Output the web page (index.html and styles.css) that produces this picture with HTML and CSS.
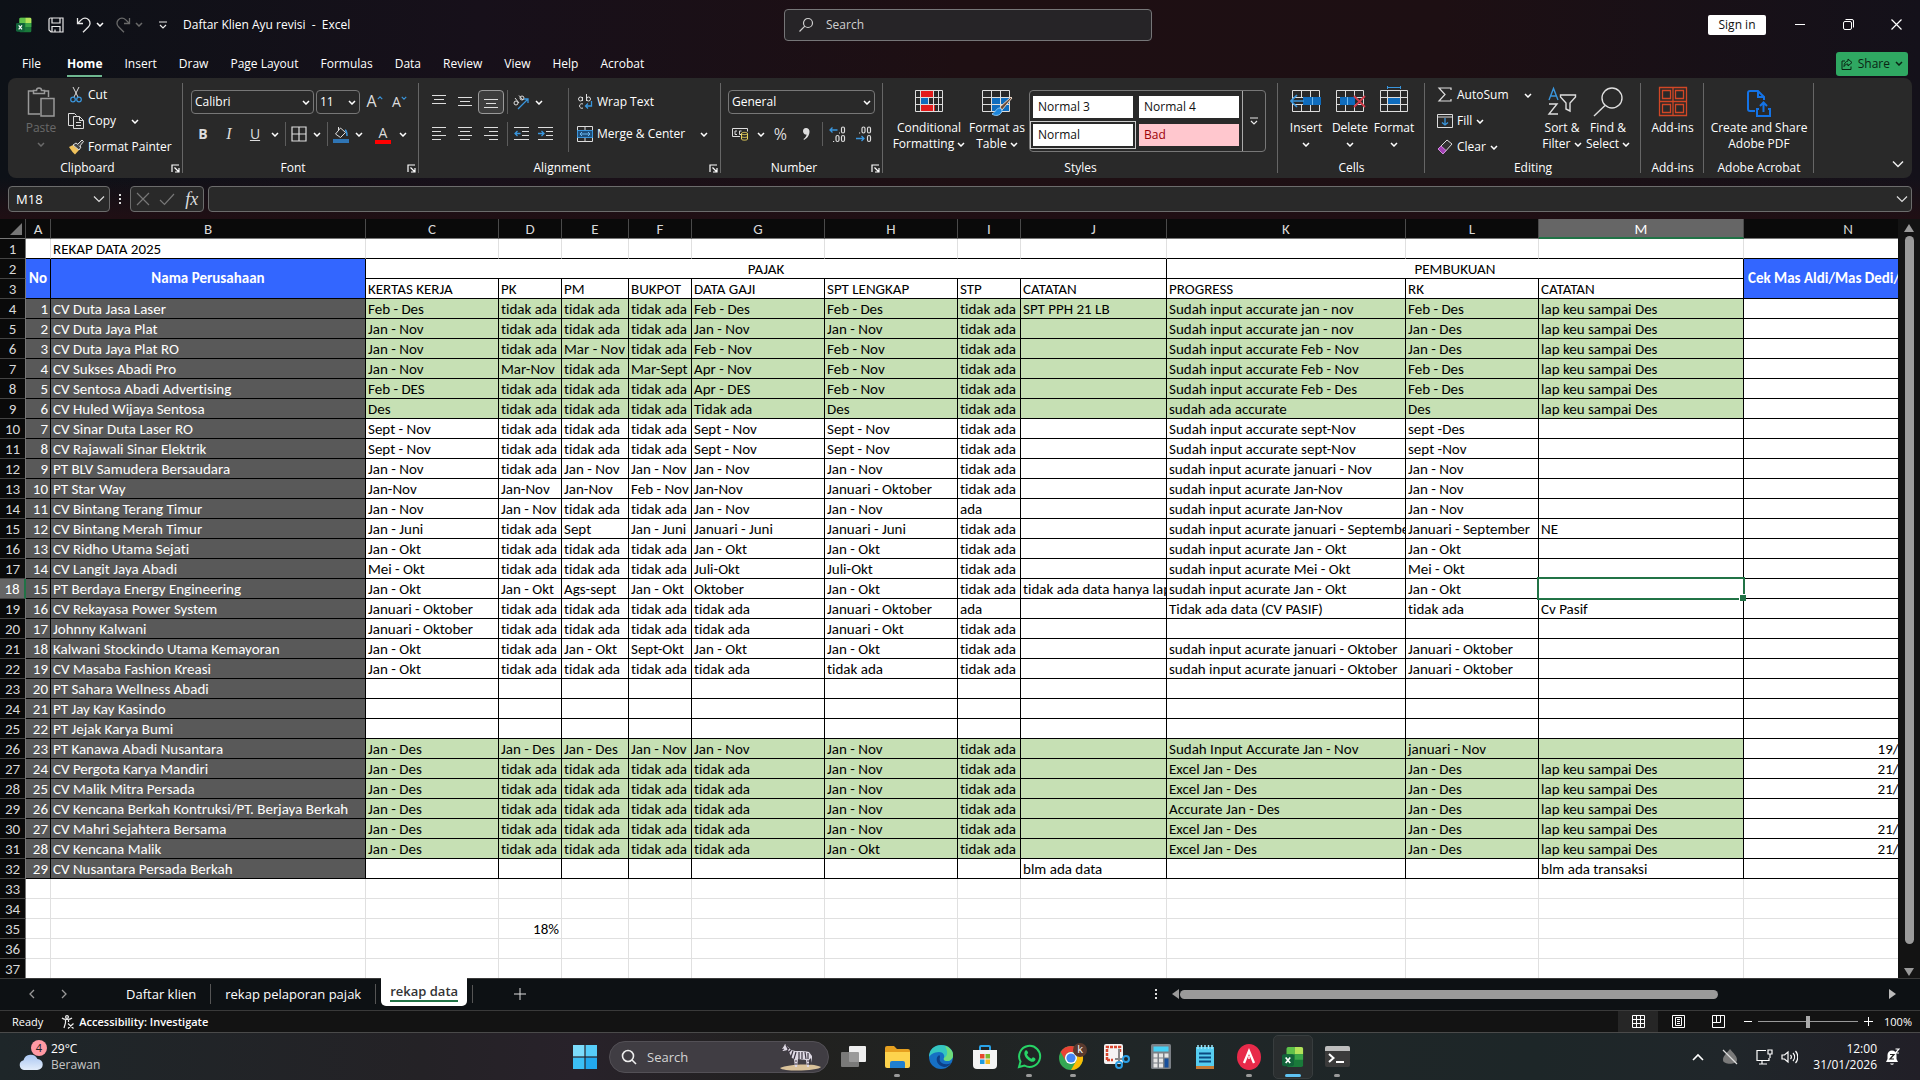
FILE: index.html
```html
<!DOCTYPE html>
<html lang="en">
<head>
    <meta charset="UTF-8">
    <meta name="viewport" content="width=device-width, initial-scale=1.0">
    <title>Daftar Klien Ayu revisi - Excel</title>
    <link rel="stylesheet" href="styles.css">
</head>
<body>
    <!-- shared icons -->
    <svg class="defs" aria-hidden="true">
        <symbol id="chev" viewBox="0 0 8 5"><path d="M1 1l3 3 3-3" fill="none" stroke="currentColor" stroke-width="1.5"/></symbol>
        <symbol id="launch" viewBox="0 0 9 9"><path d="M1 8V1h7M3.500 3.500l4 4M8 4v4H4" fill="none" stroke="currentColor" stroke-width="1.200"/></symbol>
        <symbol id="excel" viewBox="0 0 24 24">
            <rect x="5" y="1" width="18" height="22" rx="2" fill="#1a7a3a"/>
            <path d="M7 1h7v8H5V3a2 2 0 0 1 2-2z" fill="#5fc24a"/>
            <path d="M14 1h7a2 2 0 0 1 2 2v6h-9z" fill="#b4e35a"/>
            <path d="M14 9h9v6h-9z" fill="#3aa648"/>
            <rect x="0" y="9" width="13" height="13" rx="2" fill="#12633a"/>
            <path d="M4 12.500l5 6M9 12.500l-5 6" stroke="#fff" stroke-width="1.800"/>
        </symbol>
    </svg>

    <header class="titlebar">
        <div class="quick">
            <svg class="i16 logo" viewBox="0 0 24 24"><use href="#excel"/></svg>
            <button class="qbtn" aria-label="Save"><svg class="i16" viewBox="0 0 16 16" fill="none" stroke="#e8e8e8" stroke-width="1.200"><path d="M1 2.500A1.500 1.500 0 0 1 2.500 1H15v14H3l-2-2zM4 1v5h8V1M4 15V9.500h8V15M7 15v-2.500"/></svg></button>
            <button class="qbtn" aria-label="Undo"><svg class="i16" viewBox="0 0 16 16" fill="none" stroke="#e8e8e8" stroke-width="1.300"><path d="M1.500 1v5.500H7M1.500 6.500L5.500 2.600a5 5 0 0 1 7 7.200L7 15.300"/></svg><svg class="chev"><use href="#chev"/></svg></button>
            <button class="qbtn dim" aria-label="Redo"><svg class="i16" viewBox="0 0 16 16" fill="none" stroke="currentColor" stroke-width="1.300"><path d="M14.500 1v5.500H9M14.500 6.500L10.500 2.600a5 5 0 0 0-7 7.200L9 15.300"/></svg><svg class="chev"><use href="#chev"/></svg></button>
            <button class="qbtn" aria-label="Customize"><svg width="8" height="8" viewBox="0 0 8 8" fill="none" stroke="#e8e8e8" stroke-width="1.200"><path d="M0 1h8M1 4l3 3 3-3"/></svg></button>
            <span class="doc-title">Daftar Klien Ayu revisi&nbsp; -&nbsp; Excel</span>
        </div>
        <label class="search">
            <svg class="i16" viewBox="0 0 16 16" fill="none" stroke="#cfcfcf" stroke-width="1.200"><circle cx="10" cy="6" r="4.500"/><path d="M6.800 9.200L1.500 14.500"/></svg>
            <input type="text" placeholder="Search" aria-label="Search">
        </label>
        <div class="win-controls">
            <button class="signin">Sign in</button>
            <button class="win" aria-label="Minimize"><svg width="10" height="10" viewBox="0 0 10 10" stroke="#fff"><path d="M0 4.500h10"/></svg></button>
            <button class="win" aria-label="Restore"><svg width="11" height="11" viewBox="0 0 11 11" fill="none" stroke="#fff"><rect x=".5" y="2.500" width="8" height="8" rx="1.500"/><path d="M2.500.5H9A1.500 1.500 0 0 1 10.500 2v6.500"/></svg></button>
            <button class="win" aria-label="Close"><svg width="11" height="11" viewBox="0 0 11 11" stroke="#fff" stroke-width="1.200"><path d="M.5.5l10 10M10.500.5l-10 10"/></svg></button>
        </div>
    </header>

    <nav class="tabs">
        <a href="#" class="file">File</a>
        <a href="#" class="active">Home</a>
        <a href="#">Insert</a>
        <a href="#">Draw</a>
        <a href="#">Page Layout</a>
        <a href="#">Formulas</a>
        <a href="#">Data</a>
        <a href="#">Review</a>
        <a href="#">View</a>
        <a href="#">Help</a>
        <a href="#">Acrobat</a>
        <button class="share">
            <svg width="12" height="12" viewBox="0 0 12 12" fill="none" stroke="#0a2414"><path d="M4 3H1v8.500h9V8.500M7 1l4 3.500L7 8V6C5 6 4 7 3 8.500 3 5.500 4.500 3.500 7 3z"/></svg>
            Share
            <svg class="chev"><use href="#chev"/></svg>
        </button>
    </nav>

    <section class="ribbon">
        <div class="group">
            <div class="group-body clip-body">
                <button class="big dim">
                    <svg width="28" height="32" viewBox="0 0 28 32" fill="none" stroke="#9a9a9a" stroke-width="1.500"><path d="M6 5H1.500v23H13M17 5h4.500v6"/><path d="M6.500 7.500V4.500h3a2.500 2.500 0 0 1 5 0h3v3z"/><path d="M14 12.500h13V30H14z" fill="#333"/></svg>
                    <span>Paste</span>
                    <svg class="chev"><use href="#chev"/></svg>
                </button>
                <div class="stack">
                    <button class="item"><svg class="i16" viewBox="0 0 16 16" fill="none"><path d="M5 0l5 10M11 0L6 10" stroke="#ddd"/><circle cx="5" cy="12.500" r="2.300" stroke="#3a96dd" stroke-width="1.200"/><circle cx="11" cy="12.500" r="2.300" stroke="#3a96dd" stroke-width="1.200"/></svg>Cut</button>
                    <button class="item"><svg class="i16" viewBox="0 0 16 16" fill="none" stroke="#ddd"><path d="M5.500 12.500h-5V.5h6l2 2"/><path d="M5.500 3.500h6l4 4v8h-10zM11.500 3.500v4h4M8 9.500h5M8 12.500h5"/></svg>Copy <svg class="chev push"><use href="#chev"/></svg></button>
                    <button class="item"><svg class="i16" viewBox="0 0 16 16"><path d="M1 8l4-2 6 5-4 4.500L4.500 13z" fill="#f0c25c"/><path d="M5 6l3-2 5 4-2 3z" fill="#444" stroke="#ddd"/><path d="M9.500 5.500L14 1l1.500 1.500-4 5" fill="#444" stroke="#ddd"/></svg>Format Painter</button>
                </div>
            </div>
            <div class="group-label"><span>Clipboard</span><button aria-label="Clipboard settings"><svg width="9" height="9"><use href="#launch"/></svg></button></div>
        </div>

        <div class="group">
            <div class="group-body rows">
                <div class="row">
                    <label class="combo font-name"><select aria-label="Font"><option>Calibri</option></select><svg class="chev"><use href="#chev"/></svg></label>
                    <label class="combo font-size"><select aria-label="Font size"><option>11</option></select><svg class="chev"><use href="#chev"/></svg></label>
                    <button class="tool grow" aria-label="Increase font">A<svg width="6" height="4" viewBox="0 0 8 5"><path d="M1 4l3-3 3 3" fill="none" stroke="#3a96dd" stroke-width="1.500"/></svg></button>
                    <button class="tool shrink" aria-label="Decrease font">A<svg width="6" height="4" viewBox="0 0 8 5"><path d="M1 1l3 3 3-3" fill="none" stroke="#3a96dd" stroke-width="1.500"/></svg></button>
                </div>
                <div class="row">
                    <button class="tool"><b>B</b></button>
                    <button class="tool"><i class="ital">I</i></button>
                    <button class="tool"><u>U</u></button>
                    <button class="drop" aria-label="Underline options"><svg class="chev"><use href="#chev"/></svg></button>
                    <span class="sep"></span>
                    <button class="tool sm" aria-label="Borders"><svg class="i16" viewBox="0 0 16 16" fill="none" stroke="#ddd" stroke-width="1.200"><path d="M1 1h14v14H1zM8 1v14M1 8h14"/></svg></button>
                    <button class="drop" aria-label="Border options"><svg class="chev"><use href="#chev"/></svg></button>
                    <span class="sep"></span>
                    <button class="tool sm" aria-label="Fill color"><svg width="16" height="17" viewBox="0 0 16 17"><path d="M2.500 8l5-6 5 4.500-5 5zM5.500 1v4" fill="none" stroke="#ddd"/><path d="M12 4c2 1 2 3 2 6" fill="none" stroke="#3a96dd" stroke-width="1.500"/><path d="M0 13h16v4H0z" fill="#2f75b5"/></svg></button>
                    <button class="drop" aria-label="Fill options"><svg class="chev"><use href="#chev"/></svg></button>
                    <button class="tool font-color" aria-label="Font color"><span>A</span></button>
                    <button class="drop" aria-label="Font color options"><svg class="chev"><use href="#chev"/></svg></button>
                </div>
            </div>
            <div class="group-label"><span>Font</span><button aria-label="Font settings"><svg width="9" height="9"><use href="#launch"/></svg></button></div>
        </div>

        <div class="group">
            <div class="group-body split">
                <div class="rows">
                    <div class="row">
                        <button class="tool" aria-label="Top align"><svg width="14" height="14" viewBox="0 0 14 14" stroke="#ddd"><path d="M0 .5h14M2 4.500h10M0 8.500h14"/></svg></button>
                        <button class="tool" aria-label="Middle align"><svg width="14" height="14" viewBox="0 0 14 14" stroke="#ddd"><path d="M0 2.500h14M2 6.500h10M0 10.500h14"/></svg></button>
                        <button class="tool on" aria-label="Bottom align"><svg width="14" height="14" viewBox="0 0 14 14" stroke="#ddd"><path d="M0 4.500h14M2 8.500h10M0 12.500h14"/></svg></button>
                        <span class="sep"></span>
                        <button class="tool sm" aria-label="Orientation"><svg class="i16" viewBox="0 0 16 16" fill="none" stroke="#ddd"><circle cx="3" cy="9" r="2"/><path d="M2 4l4 5M6 1.500l4 4.500"/><circle cx="9" cy="4" r="2"/><path d="M5 15L15 5M15 9V5h-4" stroke="#3a96dd" stroke-width="1.300"/></svg></button>
                        <button class="drop" aria-label="Orientation options"><svg class="chev"><use href="#chev"/></svg></button>
                    </div>
                    <div class="row">
                        <button class="tool" aria-label="Align left"><svg width="14" height="14" viewBox="0 0 14 14" stroke="#ddd"><path d="M0 .5h14M0 4.500h9M0 8.500h14M0 12.500h9"/></svg></button>
                        <button class="tool" aria-label="Center"><svg width="14" height="14" viewBox="0 0 14 14" stroke="#ddd"><path d="M0 .5h14M2 4.500h10M0 8.500h14M2 12.500h10"/></svg></button>
                        <button class="tool" aria-label="Align right"><svg width="14" height="14" viewBox="0 0 14 14" stroke="#ddd"><path d="M0 .5h14M5 4.500h9M0 8.500h14M5 12.500h9"/></svg></button>
                        <span class="sep"></span>
                        <button class="tool sm" aria-label="Decrease indent"><svg width="15" height="14" viewBox="0 0 15 14" stroke="#ddd" fill="none"><path d="M0 .5h15M8 4.500h7M8 8.500h7M0 12.500h15"/><path d="M6.500 6.500H1M3.500 4L1 6.500 3.500 9" stroke="#3a96dd" stroke-width="1.300"/></svg></button>
                        <button class="tool" aria-label="Increase indent"><svg width="15" height="14" viewBox="0 0 15 14" stroke="#ddd" fill="none"><path d="M0 .5h15M8 4.500h7M8 8.500h7M0 12.500h15"/><path d="M0 6.500h6M3.500 4L6 6.500 3.500 9" stroke="#3a96dd" stroke-width="1.300"/></svg></button>
                    </div>
                </div>
                <span class="sep tall"></span>
                <div class="rows wrap-rows">
                    <button class="item"><svg class="i16" viewBox="0 0 16 16" fill="none" stroke="#ddd"><circle cx="3.500" cy="5" r="2"/><path d="M5.500 3v4M9.500 0v7M6 10a2.300 2.300 0 1 0 0 4"/><circle cx="11.500" cy="5" r="2"/><path d="M14.500 7v5H8.500M11 9.500L8.500 12l2.500 2.500" stroke="#3a96dd" stroke-width="1.300"/></svg>Wrap Text</button>
                    <button class="item"><svg class="i16" viewBox="0 0 16 16" fill="none" stroke="#9cc3e6"><path d="M.5.5h15v15H.5zM8 .5v4M8 11.500v4" stroke="#ddd"/><path d="M.5 4.500h15v7H.5z" fill="#1f4e79" stroke="#3a96dd"/><path d="M3 8h10M5 6L3 8l2 2M11 6l2 2-2 2" stroke="#6bb8f0"/></svg>Merge &amp; Center <svg class="chev push"><use href="#chev"/></svg></button>
                </div>
            </div>
            <div class="group-label"><span>Alignment</span><button aria-label="Alignment settings"><svg width="9" height="9"><use href="#launch"/></svg></button></div>
        </div>

        <div class="group">
            <div class="group-body rows">
                <label class="combo format"><select aria-label="Number format"><option>General</option></select><svg class="chev"><use href="#chev"/></svg></label>
                <div class="row">
                    <button class="tool" aria-label="Accounting format"><svg width="17" height="14" viewBox="0 0 17 14" fill="none" stroke="#ddd"><path d="M8 9.500H.5v-8h15v3M5 4H3v3.500h2M9.500 4h-2v3.500h1.500"/><path d="M9.500 6.500c0-1.500 6-1.500 6 0v5.500c0 1.500-6 1.500-6 0zM9.500 6.500c0 1.500 6 1.500 6 0M9.500 9.300c0 1.500 6 1.500 6 0" stroke="#e8d15c"/></svg></button>
                    <button class="drop" aria-label="Accounting options"><svg class="chev"><use href="#chev"/></svg></button>
                    <button class="tool pct">%</button>
                    <button class="tool" aria-label="Comma style"><svg width="10" height="14" viewBox="0 0 10 14"><path d="M5 1a3.300 3.300 0 0 1 3.500 3.500C8.500 8.500 6 11.500 3 13l-.5-1C4.500 10.500 5.500 9 5.500 7.500A3.200 3.200 0 0 1 2 4.300 3.200 3.200 0 0 1 5 1z" fill="#ddd"/></svg></button>
                    <span class="sep"></span>
                    <button class="tool" aria-label="Increase decimal"><svg width="17" height="17" viewBox="0 0 17 17" fill="none" stroke="#ddd" stroke-width="1.200"><rect x="12.500" y="1" width="3" height="6" rx="1.500"/><rect x="7" y="9.500" width="3" height="6" rx="1.500"/><rect x="12.500" y="9.500" width="3" height="6" rx="1.500"/><path d="M4 15.500h1.200M10 7h1"/><path d="M8.500 4H1M3.500 1.500L1 4l2.500 2.500" stroke="#3a96dd" stroke-width="1.300"/></svg></button>
                    <button class="tool" aria-label="Decrease decimal"><svg width="17" height="17" viewBox="0 0 17 17" fill="none" stroke="#ddd" stroke-width="1.200"><rect x="7" y="1" width="3" height="6" rx="1.500"/><rect x="12.500" y="1" width="3" height="6" rx="1.500"/><rect x="12.500" y="9.500" width="3" height="6" rx="1.500"/><path d="M4 7h1.200"/><path d="M1 12.500h8M6.500 10L9 12.500 6.500 15" stroke="#3a96dd" stroke-width="1.300"/></svg></button>
                </div>
            </div>
            <div class="group-label"><span>Number</span><button aria-label="Number settings"><svg width="9" height="9"><use href="#launch"/></svg></button></div>
        </div>

        <div class="group">
            <div class="group-body styles-body">
                <button class="big wide">
                    <svg width="30" height="32" viewBox="0 0 30 32"><path d="M6 5h13v6H6zM6 19h15v7H6z" fill="#e21b1b"/><path d="M6 12h8v6H6z" fill="#0f6cbd"/><path d="M1.500 4.500h27v21h-27zM1.500 11.500h27M1.500 18.500h27M6.500 4.500v21M19.500 4.500v21M24.500 4.500v21M14.500 11.500v7" fill="none" stroke="#ddd"/></svg>
                    <span>Conditional<br>Formatting <svg class="chev"><use href="#chev"/></svg></span>
                </button>
                <button class="big fmt">
                    <svg width="32" height="32" viewBox="0 0 32 32"><path d="M10 11h18v14H10z" fill="#0f6cbd"/><path d="M1.500 4.500h27v21h-27zM1.500 11.500h27M1.500 18.500h27M10.500 4.500v21M19.500 4.500v21" fill="none" stroke="#ddd"/><path d="M30 11L19 21l2 3L31 12z" fill="#6b4a35" stroke="#e6d5c8"/><path d="M19 22c-4 0-4 4-8 6 4 3 10 1 10-4z" fill="#1c86dc" stroke="#8cc8f5"/></svg>
                    <span>Format as<br>Table <svg class="chev"><use href="#chev"/></svg></span>
                </button>
                <div class="gallery">
                    <div class="gallery-items">
                        <button>Normal 3</button>
                        <button>Normal 4</button>
                        <button class="picked">Normal</button>
                        <button class="bad">Bad</button>
                    </div>
                    <button class="more" aria-label="More styles"><svg width="8" height="8" viewBox="0 0 8 8" fill="none" stroke="#e8e8e8" stroke-width="1.200"><path d="M0 1h8M1 4l3 3 3-3"/></svg></button>
                </div>
            </div>
            <div class="group-label"><span>Styles</span></div>
        </div>

        <div class="group">
            <div class="group-body cells-body">
                <button class="big">
                    <svg width="32" height="32" viewBox="0 0 32 32"><path d="M2.500 4.500h27v21h-27zM2.500 11.500h27M2.500 18.500h27M11.500 4.500v7M20.500 4.500v7M11.500 18.500v7M20.500 18.500v7" fill="none" stroke="#ddd"/><path d="M13 11h18v8H13z" fill="#0f6cbd"/><path d="M22.500 11v8" stroke="#6bb8f0"/><path d="M14 15H1.500M7 9l-6 6 6 6" fill="none" stroke="#3a96dd" stroke-width="1.600"/></svg>
                    <span>Insert</span>
                    <svg class="chev"><use href="#chev"/></svg>
                </button>
                <button class="big">
                    <svg width="32" height="32" viewBox="0 0 32 32"><path d="M2.500 4.500h27v21h-27zM2.500 11.500h27M2.500 18.500h27M11.500 4.500v7M20.500 4.500v7M11.500 18.500v7M20.500 18.500v7" fill="none" stroke="#ddd"/><path d="M6 11h15v8H6z" fill="#0f6cbd"/><path d="M13.500 11v8" stroke="#6bb8f0"/><path d="M20 10l11 11M31 10L20 21" stroke="#d13b4a" stroke-width="1.800"/></svg>
                    <span>Delete</span>
                    <svg class="chev"><use href="#chev"/></svg>
                </button>
                <button class="big">
                    <svg width="32" height="32" viewBox="0 0 32 32"><path d="M9 11h13v8H9z" fill="#0f6cbd"/><path d="M2.500 4.500h27v21h-27zM2.500 11.500h27M2.500 18.500h27M9.500 4.500v21M22.500 4.500v21" fill="none" stroke="#ddd"/><path d="M9 1.500h14M9.500 0v3M22.500 0v3" stroke="#3a96dd" fill="none"/></svg>
                    <span>Format</span>
                    <svg class="chev"><use href="#chev"/></svg>
                </button>
            </div>
            <div class="group-label"><span>Cells</span></div>
        </div>

        <div class="group">
            <div class="group-body edit-body">
                <div class="stack">
                    <button class="item"><svg class="i16" viewBox="0 0 16 16" fill="none" stroke="#ddd" stroke-width="1.200"><path d="M14 3V1H2l6 6.500L2 14h12v-2"/></svg>AutoSum <svg class="chev push"><use href="#chev"/></svg></button>
                    <button class="item"><svg class="i16" viewBox="0 0 16 16" fill="none" stroke="#ddd"><path d="M.5 1.500h15v13H.5zM.5 4h15"/><path d="M8 5v7M5 9.500L8 12l3-2.500" stroke="#3a96dd" stroke-width="1.300"/></svg>Fill <svg class="chev"><use href="#chev"/></svg></button>
                    <button class="item"><svg class="i16" viewBox="0 0 16 16" stroke="#ddd"><path d="M1 10l9-9 5 4-9 10z" fill="#333"/><path d="M1 10l3-3 5 4.500L6 15z" fill="#a33fb5" stroke="#cf8adb"/></svg>Clear <svg class="chev"><use href="#chev"/></svg></button>
                </div>
                <button class="big">
                    <svg width="30" height="32" viewBox="0 0 30 32" fill="none" stroke="#ddd" stroke-width="1.400"><path d="M2 14l4.500-11.500L11 14M3.500 10h6" stroke="#3a96dd"/><path d="M2 18h8L2 28h9"/><path d="M13.500 9h15v2l-5.500 6v8l-4-2v-6l-5.500-6z"/></svg>
                    <span>Sort &amp;<br>Filter <svg class="chev"><use href="#chev"/></svg></span>
                </button>
                <button class="big">
                    <svg width="30" height="32" viewBox="0 0 30 32" fill="none" stroke="#ddd" stroke-width="1.400"><circle cx="19" cy="12" r="10"/><path d="M12 19.500L1 30"/></svg>
                    <span>Find &amp;<br>Select <svg class="chev"><use href="#chev"/></svg></span>
                </button>
            </div>
            <div class="group-label"><span>Editing</span></div>
        </div>

        <div class="group">
            <div class="group-body center-body">
                <button class="big">
                    <svg width="30" height="32" viewBox="0 0 30 32" fill="none" stroke="#d24726" stroke-width="1.300"><path d="M1.500 1.500h27v28h-27zM15 1.500v28M1.500 15.500h27"/><path d="M4.500 4.500h8v8h-8zM17.500 4.500h8v8h-8zM4.500 18.500h8v8h-8zM17.500 18.500h8v8h-8z"/></svg>
                    <span>Add-ins</span>
                </button>
            </div>
            <div class="group-label"><span>Add-ins</span></div>
        </div>

        <div class="group">
            <div class="group-body center-body">
                <button class="big">
                    <svg width="26" height="32" viewBox="0 0 26 32" fill="none" stroke="#1473e6" stroke-width="2"><path d="M9 25H4a2 2 0 0 1-2-2V7a2 2 0 0 1 2-2h8l6 6v3M12 5v6h6"/><path d="M13 23h-2v7h13v-7h-2M17.500 26v-9M14 20l3.500-3.500L21 20"/></svg>
                    <span>Create and Share<br>Adobe PDF</span>
                </button>
            </div>
            <div class="group-label"><span>Adobe Acrobat</span></div>
        </div>

        <div class="ribbon-end"><button aria-label="Collapse ribbon"><svg width="12" height="8" viewBox="0 0 12 8"><path d="M1 1.500l5 5 5-5" fill="none" stroke="#eee" stroke-width="1.500"/></svg></button></div>
    </section>

    <div class="formula-bar">
        <label class="name-box"><input type="text" value="M18" aria-label="Name box"><svg width="12" height="8" viewBox="0 0 12 8"><path d="M1 1.500l5 5 5-5" fill="none" stroke="#ddd" stroke-width="1.200"/></svg></label>
        <span class="dots"><i></i><i></i><i></i></span>
        <div class="fx">
            <button aria-label="Cancel"><svg width="14" height="14" viewBox="0 0 14 14"><path d="M1 1l12 12M13 1L1 13" stroke="#777" stroke-width="1.200"/></svg></button>
            <button aria-label="Enter"><svg width="16" height="14" viewBox="0 0 16 14"><path d="M1 8l4.500 4.500L15 2" fill="none" stroke="#777" stroke-width="1.200"/></svg></button>
            <button class="fx-label">fx</button>
        </div>
        <label class="formula"><input type="text" aria-label="Formula"><svg width="12" height="8" viewBox="0 0 12 8"><path d="M1 1.500l5 5 5-5" fill="none" stroke="#ddd" stroke-width="1.200"/></svg></label>
    </div>

    <main class="sheet">
        <div class="grid-wrap">
            <table class="grid">
                <colgroup>
                    <col class="w-head"><col class="w-a"><col class="w-b"><col class="w-m133"><col class="w-s63"><col class="w-e"><col class="w-s63"><col class="w-m133"><col class="w-m133"><col class="w-s63"><col class="w-j"><col class="w-k"><col class="w-m133"><col class="w-m"><col class="w-n">
                </colgroup>
                <thead>
                    <tr><th class="corner"><svg width="12" height="12" viewBox="0 0 12 12"><path d="M12 0v12H0z" fill="#777"/></svg></th><th>A</th><th>B</th><th>C</th><th>D</th><th>E</th><th>F</th><th>G</th><th>H</th><th>I</th><th>J</th><th>K</th><th>L</th><th class="sel">M</th><th>N</th></tr>
                </thead>
                <tbody id="rows"></tbody>
            </table>
        </div>
        <div class="vscroll">
            <svg width="10" height="8" viewBox="0 0 10 8"><path d="M5 0l5 8H0z" fill="#9a9a9a"/></svg>
            <span class="vthumb"></span>
            <svg width="10" height="8" viewBox="0 0 10 8"><path d="M5 8l5-8H0z" fill="#9a9a9a"/></svg>
        </div>
    </main>

    <div class="sheet-tabs">
        <div class="sheet-nav">
            <button aria-label="Previous sheet"><svg width="8" height="10" viewBox="0 0 8 10"><path d="M6 1L2 5l4 4" fill="none" stroke="#999" stroke-width="1.300"/></svg></button>
            <button aria-label="Next sheet"><svg width="8" height="10" viewBox="0 0 8 10"><path d="M2 1l4 4-4 4" fill="none" stroke="#999" stroke-width="1.300"/></svg></button>
        </div>
        <button class="stab">Daftar klien</button>
        <button class="stab">rekap pelaporan pajak</button>
        <button class="stab current"><span>rekap data</span></button>
        <button class="add" aria-label="New sheet"><svg width="12" height="12" viewBox="0 0 12 12"><path d="M6 0v12M0 6h12" stroke="#ddd"/></svg></button>
        <div class="hscroll">
            <span class="dots"><i></i><i></i><i></i></span>
            <svg width="8" height="10" viewBox="0 0 8 10"><path d="M7 0v10L0 5z" fill="#9a9a9a"/></svg>
            <span class="htrack"><span class="hthumb"></span></span>
            <svg width="8" height="10" viewBox="0 0 8 10"><path d="M1 0v10l7-5z" fill="#bbb"/></svg>
        </div>
    </div>

    <footer class="status">
        <span>Ready</span>
        <button class="access"><svg width="14" height="14" viewBox="0 0 14 14" fill="none" stroke="#eee" stroke-width="1.200"><circle cx="6" cy="2" r="1.400"/><path d="M1 3c2 2 8 2 10 0M4.500 4.500V8L3 13M7.500 4.500V7M7 8.500l5.500 5M12.500 8.500L7 13.500"/></svg>Accessibility: Investigate</button>
        <div class="views">
            <button class="view on" aria-label="Normal view"><svg width="13" height="13" viewBox="0 0 13 13" fill="none" stroke="#fff"><path d="M.5.5h12v12H.5zM.5 4.500h12M.5 8.500h12M4.500.5v12M8.500.5v12"/></svg></button>
            <button class="view" aria-label="Page layout view"><svg width="13" height="13" viewBox="0 0 13 13" fill="none" stroke="#fff"><path d="M.5.5h12v12H.5zM3.500 2.500h6v8h-6zM5 4.500h3M5 6.500h3M5 8.500h3"/></svg></button>
            <button class="view" aria-label="Page break view"><svg width="13" height="13" viewBox="0 0 13 13" fill="none" stroke="#fff"><path d="M.5.5h12v12H.5zM4.500.5v7M8.500.5v7M.5 7.500h8"/></svg></button>
            <button class="zoom-btn" aria-label="Zoom out"><svg width="8" height="8" viewBox="0 0 8 8"><path d="M0 3.500h8" stroke="#fff"/></svg></button>
            <input type="range" min="0" max="100" value="50" aria-label="Zoom">
            <button class="zoom-btn" aria-label="Zoom in"><svg width="9" height="9" viewBox="0 0 9 9"><path d="M0 4.500h9M4.500 0v9" stroke="#fff"/></svg></button>
            <span class="pct-text">100%</span>
        </div>
    </footer>

    <div class="taskbar">
        <div class="weather">
            <div class="cloud">
                <svg width="24" height="20" viewBox="0 0 24 20"><defs><linearGradient id="cl" x1="0" y1="0" x2="0" y2="1"><stop offset="0" stop-color="#a9c6f2"/><stop offset="1" stop-color="#e3edfb"/></linearGradient></defs><path d="M5 19a5 5 0 0 1-.5-9.800A7.500 7.500 0 0 1 18.500 8 5.500 5.500 0 0 1 18 19z" fill="url(#cl)"/></svg>
                <span class="badge">4</span>
            </div>
            <div><div>29°C</div><div class="soft">Berawan</div></div>
        </div>
        <div class="apps">
            <button class="app win-start" aria-label="Start"><svg width="24" height="24" viewBox="0 0 24 24" fill="#3cc0f5"><path d="M0 0h11.400v11.400H0z" fill="#7cdcfb"/><path d="M12.600 0H24v11.400H12.600z" fill="#56cdf9"/><path d="M0 12.600h11.400V24H0z"/><path d="M12.600 12.600H24V24H12.600z" fill="#22a9ee"/></svg></button>
            <label class="task-search">
                <svg width="16" height="16" viewBox="0 0 16 16" fill="none" stroke="#eee" stroke-width="1.600"><circle cx="7" cy="7" r="5.500"/><path d="M11 11l4 4"/></svg>
                <input type="text" placeholder="Search" aria-label="Search Windows">
                <svg width="44" height="28" viewBox="0 0 44 28"><path d="M2 25c8-4 34-5 41-1-2 4-38 5-41 1z" fill="#d9c29a"/><path d="M7 1l2 2 4 4c6 2 11 0 18 2l3 4v7l-1-5-2 2v7h-2l-1-7-8-1-1 8h-2l-1-8-2-1-4-8-5 1-1-2 2-3z" fill="#ded9e4"/><path d="M8 2l2 4M11 5l-2 3M13 7l-3 3M15 8l-2 6M18 9l-2 7M21 9v7M24 9v7M27 9l1 7M30 10v6M17 18h2M17 21h2M29 18h3M29 21h3M3 7l3-1" stroke="#3a3440" stroke-width="1.200"/></svg>
            </label>
            <button class="app" aria-label="Task view"><svg width="25" height="24" viewBox="0 0 25 24"><rect x="8" y="1" width="17" height="16" rx="1" fill="#eee"/><rect x="0" y="7" width="18" height="15" rx="1" fill="#8a8a8a" opacity=".85"/></svg></button>
            <button class="app run" aria-label="File Explorer"><svg width="25" height="24" viewBox="0 0 25 24"><path d="M0 3a2 2 0 0 1 2-2h7l3 3h11a2 2 0 0 1 2 2v4H0z" fill="#e6a020"/><path d="M0 7h25v14a2 2 0 0 1-2 2H2a2 2 0 0 1-2-2z" fill="#fdd34d"/><path d="M5 23v-5a2 2 0 0 1 2-2h11a2 2 0 0 1 2 2v5z" fill="#1f7fd0"/></svg></button>
            <button class="app" aria-label="Edge"><svg width="24" height="24" viewBox="0 0 24 24"><circle cx="12" cy="12" r="12" fill="#1670c4"/><path d="M0 12C0 4 6 0 12 0c8 0 12 5 12 10 0 4-3 6-6 6-2 0-4-1-3-3 1-3-1-6-5-6-5 0-9 3-10 5z" fill="#35c6c0"/><path d="M16 1c6 2 8 6 8 9 0 4-3 6-6 6-2 0-4-1-3-3 4-2 4-7 1-12z" fill="#6fdc7a"/><path d="M9 11c-3 3-1 10 6 11 3 0 6-2 7-4-6 3-13 0-11-6 0-2-1-2-2-1z" fill="#0d3f86"/></svg></button>
            <button class="app" aria-label="Store"><svg width="24" height="26" viewBox="0 0 24 26"><path d="M7 7V3a1 1 0 0 1 1-1h8a1 1 0 0 1 1 1v4" fill="none" stroke="#2aa3e8" stroke-width="2"/><path d="M0 6h24v15a4 4 0 0 1-4 4H4a4 4 0 0 1-4-4z" fill="#f4f4f4"/><path d="M7 10h4.500v4.500H7z" fill="#e8482c"/><path d="M12.500 10H17v4.500h-4.500z" fill="#7cb82f"/><path d="M7 15.500h4.500V20H7z" fill="#1e9be0"/><path d="M12.500 15.500H17V20h-4.500z" fill="#f5b81c"/></svg></button>
            <button class="app run" aria-label="WhatsApp"><svg width="25" height="25" viewBox="0 0 25 25"><path d="M2 23l1.500-5.500a10.500 10.500 0 1 1 4 4z" fill="none" stroke="#27d366" stroke-width="2"/><path d="M8.500 6.500c1-.8 2 .2 2.700 2.400L10 10.500c1 2 2.500 3.500 4.500 4.300l1.400-1.500c2.200.8 3.200 1.700 2.300 3-2 2.700-5 1.600-8-1.300S6.500 8.500 8.500 6.500z" fill="#27d366"/></svg></button>
            <button class="app run" aria-label="Chrome"><svg width="28" height="28" viewBox="0 0 28 28"><circle cx="12" cy="15" r="12" fill="#34a853"/><path d="M1.600 9A12 12 0 0 1 22.400 9H12a6 6 0 0 0-5.200 9z" fill="#ea4335"/><path d="M22.400 9A12 12 0 0 1 12 27l5.200-9A6 6 0 0 0 17 11.500V9z" fill="#fbbc05"/><circle cx="12" cy="15" r="6" fill="#fff"/><circle cx="12" cy="15" r="4.600" fill="#4285f4"/><circle cx="21" cy="7" r="7" fill="#5a3a2e"/></svg><span class="profile">k</span></button>
            <button class="app" aria-label="Snipping Tool"><svg width="26" height="26" viewBox="0 0 26 26"><rect width="19" height="20" rx="2" fill="#f4f4f4"/><path d="M3 16V3h13v6M3 16h6" fill="none" stroke="#d8452e" stroke-width="2.500" stroke-dasharray="3 1"/><path d="M15 5v13M11 15l9 0" stroke="#888" stroke-width="2"/><circle cx="15" cy="21" r="3" fill="none" stroke="#2b9fe6" stroke-width="2"/><circle cx="22" cy="15" r="3" fill="none" stroke="#2b9fe6" stroke-width="2"/></svg></button>
            <button class="app" aria-label="Calculator"><svg width="20" height="25" viewBox="0 0 20 25"><rect width="20" height="25" rx="1.500" fill="#7b8086"/><path d="M2.500 2.500h15v5h-15z" fill="#46d0f5"/><path d="M2.500 9.500h4v4h-4zM8 9.500h4v4H8zM13.500 9.500h4v4h-4zM2.500 14.500h4v4h-4zM8 14.500h4v4H8zM2.500 19.500h4v4h-4zM8 19.500h4v4H8z" fill="#e6e6e6"/><path d="M13.500 14.500h4v9h-4z" fill="#164f9c"/></svg></button>
            <button class="app" aria-label="Notepad"><svg width="20" height="26" viewBox="0 0 20 26"><path d="M1 3h18v19H1z" fill="#56cdf0"/><path d="M1 22h18v3H1z" fill="#c47a35"/><path d="M3 1v4M6.500 1v4M10 1v4M13.500 1v4M17 1v4" stroke="#9fe6fa" stroke-width="1.500"/><path d="M4 9.500h12M4 13.500h12M4 17.500h12" stroke="#0b4a80" stroke-width="1.800"/></svg></button>
            <button class="app run" aria-label="Accurate"><svg width="24" height="26" viewBox="0 0 24 26"><ellipse cx="12" cy="13" rx="12" ry="13" fill="#e82a4a"/><path d="M7 19l5-12 5 12" fill="none" stroke="#fff" stroke-width="2.300"/><path d="M12 15v-3" stroke="#fff" stroke-width="1.500"/></svg></button>
            <button class="app active-app" aria-label="Excel"><svg width="22" height="24"><use href="#excel"/></svg></button>
            <button class="app run" aria-label="Terminal"><svg width="25" height="21" viewBox="0 0 25 21"><rect width="25" height="21" rx="2" fill="#3b3b3b"/><path d="M2 0h21a2 2 0 0 1 2 2v3H0V2a2 2 0 0 1 2-2z" fill="#bdbdbd"/><path d="M4 8l4.500 4L4 16" fill="none" stroke="#fff" stroke-width="2"/><path d="M11 16h8" stroke="#fff" stroke-width="2"/></svg></button>
        </div>
        <div class="tray">
            <button aria-label="Show hidden icons"><svg width="12" height="8" viewBox="0 0 12 8"><path d="M1 7l5-5 5 5" fill="none" stroke="#fff" stroke-width="1.600"/></svg></button>
            <svg width="16" height="16" viewBox="0 0 16 16"><path d="M8 0c4 5 7 7 7 11 0 5-14 5-14 0C1 7 4 5 8 0z" fill="#7a7a7a"/><path d="M1 1l14 14" stroke="#ddd" stroke-width="1.300"/></svg>
            <div class="net">
                <svg width="17" height="16" viewBox="0 0 17 16" fill="none" stroke="#fff" stroke-width="1.200"><path d="M10 1.500H1v10h12V9M6 12v3M3 15h8M12 1h4v4h-4zM14 5v4"/></svg>
                <svg width="17" height="14" viewBox="0 0 17 14" fill="none" stroke="#fff" stroke-width="1.200"><path d="M1 5v4h2.500L7 12V2L3.500 5zM9.500 5a3 3 0 0 1 0 4M12 3a6 6 0 0 1 0 8M14.500 1a9 9 0 0 1 0 12"/></svg>
            </div>
            <div class="clock"><div>12:00</div><div>31/01/2026</div></div>
            <svg width="15" height="18" viewBox="0 0 15 18"><path d="M1 14l1.500-3V7a4.500 4.500 0 0 1 9 0v4l1.500 3z" fill="#fff"/><path d="M5 15.500a2.200 2.200 0 0 0 4 0z" fill="#fff"/><path d="M5 6.500h4l-4 4.500h4" fill="none" stroke="#222" stroke-width="1.200"/><path d="M10.500 1H14l-3.500 4H14" fill="none" stroke="#fff" stroke-width="1.200"/></svg>
        </div>
    </div>

    <script src="script.js"></script>
</body>
</html>
```

FILE: styles.css
```css
* {
    box-sizing: border-box;
}

body {
    margin: 0;
    height: 100vh;
    display: flex;
    flex-direction: column;
    overflow: hidden;
    font-family: "Open Sans", "Noto Sans", sans-serif;
    font-size: 12px;
    line-height: 16px;
    color: #fff;
    background: linear-gradient(90deg, #0d1117 0%, #17101a 25%, #1e0f13 50%, #1d0f13 75%, #14111a 100%);
}

button, input, select {
    font: inherit;
    color: inherit;
    background: none;
    border: none;
    padding: 0;
    margin: 0;
    outline: none;
}

button {
    display: flex;
    align-items: center;
    justify-content: center;
    white-space: nowrap;
}

svg {
    flex: none;
}

.defs {
    position: absolute;
    width: 0;
    height: 0;
}

.i16 {
    width: 16px;
    height: 16px;
}

.chev {
    width: 8px;
    height: 5px;
    vertical-align: middle;
}

.dim {
    color: #6a6a6a;
}

/* Title bar */
.titlebar {
    height: 49px;
    display: grid;
    grid-template-columns: 1fr 368px 1fr;
    align-items: center;
    flex: none;
    padding-left: 16px;
}

.quick {
    display: flex;
    align-items: center;
    gap: 11px;
}

.logo {
    margin-right: 4px;
}

.qbtn {
    min-width: 18px;
    gap: 4px;
}

.doc-title {
    white-space: nowrap;
}

.search {
    height: 32px;
    display: flex;
    align-items: center;
    gap: 12px;
    padding: 0 13px;
    border: 1px solid #767678;
    border-radius: 4px;
    background: #262427;
}

.search input {
    flex: 1;
    min-width: 0;
}

.search input::placeholder {
    color: #d0d0d0;
}

.win-controls {
    display: flex;
    justify-content: flex-end;
    align-items: center;
}

.signin {
    width: 58px;
    height: 20px;
    margin-right: 10px;
    background: #fff;
    color: #111;
    border-radius: 2px;
}

.win {
    width: 48px;
    height: 30px;
}

/* Tabs */
.tabs {
    height: 29px;
    flex: none;
    display: flex;
    align-items: center;
    gap: 22px;
    padding: 0 12px 0 22px;
}

.tabs a {
    color: #fff;
    text-decoration: none;
    white-space: nowrap;
    border-bottom: 2px solid transparent;
    line-height: 22px;
    margin-top: 3px;
}

.tabs .file {
    margin-right: 4px;
}

.tabs a.active {
    font-weight: bold;
    border-bottom-color: #6fb790;
}

.share {
    margin-left: auto;
    height: 24px;
    padding: 0 5px;
    gap: 5px;
    background: #2fa862;
    color: #0a2414;
    border-radius: 3px;
}

/* Ribbon */
.ribbon {
    height: 100px;
    flex: none;
    margin: 0 8px;
    display: grid;
    grid-template-columns: 175px 236px 302px 162px 395px 147px 216px 63px 110px 1fr;
    background: #292929;
    border-radius: 8px;
    overflow: hidden;
}

.group {
    display: flex;
    flex-direction: column;
    min-width: 0;
    background: linear-gradient(#666, #666) right 5px / 1px 90px no-repeat;
}

.group-body {
    height: 80px;
    display: flex;
}

.group-label {
    height: 20px;
    display: flex;
    align-items: center;
}

.group-label span {
    flex: 1;
    text-align: center;
    white-space: nowrap;
}

.group-label button {
    width: 16px;
    height: 16px;
}

.rows {
    display: flex;
    flex-direction: column;
    gap: 8px;
    padding: 12px 7px 0;
}

.split {
    padding: 0;
}

.split .rows {
    padding-right: 0;
}

.row {
    display: flex;
    height: 24px;
    align-items: center;
}

.tool {
    width: 26px;
    height: 24px;
    color: #ddd;
    font-size: 14px;
}

.tool.sm {
    width: 22px;
}

.tool.on {
    background: #3d3d3d;
    border: 1px solid #9a9a9a;
    border-radius: 4px;
}

.grow {
    font-size: 16px;
    margin-left: 2px;
    align-items: flex-start;
    line-height: 22px;
}

.grow svg, .shrink svg {
    margin-top: 6px;
}

.shrink {
    font-size: 14px;
    align-items: flex-start;
    line-height: 24px;
}

.ital {
    font-family: "Liberation Serif", serif;
    font-size: 16px;
}

.font-color {
    margin-left: 4px;
}

.font-color span {
    width: 16px;
    line-height: 15px;
    border-bottom: 4px solid #f00;
}

.pct {
    font-size: 16px;
}

.drop {
    width: 14px;
    height: 24px;
}

.sep {
    width: 1px;
    height: 24px;
    margin: 0 2px 0 3px;
    background: #5c5c5c;
}

.sep.tall {
    height: 64px;
    margin: 10px 2px 0 auto;
}

.combo {
    flex: none;
    display: flex;
    align-items: center;
    height: 24px;
    padding: 0 3px;
    border: 1px solid #777;
    border-radius: 4px;
}

.combo select {
    flex: 1;
    min-width: 0;
    appearance: none;
}

.font-name {
    width: 123px;
    margin: 0 2px 0 1px;
}

.font-size {
    width: 44px;
}

.format {
    width: 147px;
}

.item {
    flex: none;
    height: 26px;
    gap: 4px;
    justify-content: flex-start;
}

.stack {
    display: flex;
    flex-direction: column;
    padding-top: 4px;
}

.push {
    margin-left: 11px;
}

.wrap-rows {
    flex: none;
    width: 150px;
    padding: 12px 6px 0;
}

.wrap-rows .item {
    height: 24px;
}

.big {
    flex-direction: column;
    justify-content: flex-start;
    width: 44px;
    padding-top: 8px;
}

.big > span {
    margin-top: 2px;
    text-align: center;
}

.big > .chev {
    margin-top: 6px;
}

.clip-body {
    padding-left: 11px;
    gap: 5px;
}

.styles-body {
    padding-left: 8px;
}

.big.wide {
    width: 76px;
}

.big.fmt {
    width: 60px;
}

.gallery {
    display: flex;
    height: 62px;
    margin: 12px 0 0 2px;
    border: 1px solid #777;
    border-radius: 4px;
}

.gallery-items {
    display: grid;
    grid-template-columns: 100px 100px;
    gap: 6px;
    padding: 5px 3px;
}

.gallery-items button {
    height: 22px;
    padding: 0 5px;
    justify-content: flex-start;
    background: #fff;
    color: #111;
}

.gallery-items .picked {
    outline: 1px solid #ccc;
    outline-offset: 2px;
}

.gallery-items .bad {
    background: #ffc7ce;
    color: #9c0006;
}

.more {
    width: 23px;
    border-left: 1px solid #aaa;
}

.cells-body {
    padding-left: 6px;
}

.edit-body {
    padding-left: 12px;
    gap: 2px;
}

.edit-body .stack {
    width: 101px;
}

.center-body {
    justify-content: center;
}

.center-body .big {
    width: auto;
}

.ribbon-end {
    display: flex;
    justify-content: flex-end;
    align-items: flex-end;
    padding: 0 8px 10px;
}

/* Formula bar */
.formula-bar {
    height: 41px;
    flex: none;
    display: flex;
    align-items: flex-start;
    padding: 8px 8px 0;
    background: linear-gradient(180deg, transparent, #200f14);
}

.name-box, .fx, .formula {
    height: 26px;
    display: flex;
    align-items: center;
    border: 1px solid #6c6c6c;
    border-radius: 4px;
    background: #292929;
}

.name-box {
    width: 102px;
    padding: 0 4px 0 7px;
}

.name-box input {
    flex: 1;
    min-width: 0;
    font-size: 13px;
}

.fx {
    width: 74px;
    justify-content: space-around;
}

.fx-label {
    font-family: "Liberation Serif", serif;
    font-style: italic;
    font-size: 18px;
    color: #ddd;
}

.formula {
    flex: 1;
    margin-left: 4px;
    padding: 0 3px;
}

.formula input {
    flex: 1;
}

.dots {
    display: flex;
    flex-direction: column;
    gap: 2px;
    width: 20px;
    align-items: center;
    align-self: flex-start;
    padding-top: 8px;
}

.dots i {
    width: 2px;
    height: 2px;
    background: #ddd;
}

/* Spreadsheet */
.sheet {
    flex: 1;
    min-height: 0;
    display: flex;
    background: #131313;
}

.grid-wrap {
    flex: 1;
    min-width: 0;
    overflow: hidden;
    background: #fff;
}

.grid {
    width: 1953px;
    table-layout: fixed;
    border-collapse: separate;
    border-spacing: 0;
    font-family: Calibri, Carlito, Lato, sans-serif;
    font-size: 15px;
    font-variant-ligatures: none;
    line-height: 17px;
    color: #000;
}

.w-head { width: 26px; }
.w-a { width: 25px; }
.w-b { width: 315px; }
.w-s63 { width: 63px; }
.w-e { width: 67px; }
.w-m133 { width: 133px; }
.w-j { width: 146px; }
.w-k { width: 239px; }
.w-m { width: 205px; }
.w-n { width: 209px; }

.grid th, .grid td {
    height: 20px;
    padding: 2px 2px 0;
    overflow: hidden;
    white-space: nowrap;
    text-align: left;
    font-weight: normal;
    border-right: 1px solid #e0e0e0;
    border-bottom: 1px solid #e0e0e0;
}

.grid thead th, .grid .rh {
    padding: 2px 0 0;
    text-align: center;
    background: #0a0a0a;
    color: #d8d8d8;
    border-right-color: #4a4a4a;
    border-bottom-color: #777;
}

.grid .rh {
    border-right-color: #777;
    border-bottom-color: #444;
}

.grid thead .corner {
    text-align: right;
    line-height: 12px;
    vertical-align: bottom;
    padding: 0 3px 2px 0;
}

.grid thead .sel {
    background: #666;
    color: #fff;
    border-bottom: 2px solid #217346;
    line-height: 16px;
}

.grid .rh.sel {
    background: #666;
    color: #fff;
    border-right: 2px solid #217346;
}

.grid .line td {
    border-color: #000;
}

.grid .under td {
    border-bottom-color: #000;
}

.grid .line .blue {
    padding: 0;
    background: #3366ff;
    color: #fff;
    font-weight: bold;
    text-align: center;
}

.grid .line .blue.cek {
    text-align: left;
    padding-left: 4px;
}

.grid .merged {
    text-align: center;
}

.grid .line .dark {
    background: #595959;
    color: #fff;
}

.grid .num {
    text-align: right;
}

.grid .done td.fill {
    background: #c6e0b4;
}

/* selected cell frame, drawn over the neighbouring borders */
.grid td.cursor {
    position: relative;
    overflow: visible;
}

.cursor::before {
    content: "";
    position: absolute;
    inset: -2px;
    border: 2px solid #217346;
}

.cursor::after {
    content: "";
    position: absolute;
    right: -3px;
    bottom: -3px;
    width: 6px;
    height: 6px;
    background: #217346;
    border: 1px solid #fff;
    border-width: 1px 0 0 1px;
}

.vscroll {
    width: 22px;
    display: flex;
    flex-direction: column;
    align-items: center;
    padding: 5px 0 2px;
    gap: 4px;
}

.vthumb {
    flex: 1;
    width: 9px;
    margin-bottom: 20px;
    border-radius: 5px;
    background: #9a9a9a;
}

/* Sheet tabs */
.sheet-tabs {
    height: 32px;
    flex: none;
    display: flex;
    align-items: flex-start;
    background: #0d1114;
    border-top: 1px solid #3a3a3a;
}

.sheet-nav {
    display: flex;
    width: 112px;
    height: 30px;
    gap: 24px;
    padding-left: 28px;
}

.stab {
    height: 20px;
    margin-top: 5px;
    padding: 0 14px;
    font-size: 13px;
    border-right: 1px solid #555;
}

.stab.current {
    height: 28px;
    margin: -1px 5px 0 5px;
    padding: 0 9px;
    background: #fff;
    color: #333;
    font-weight: 600;
    border: none;
    border-radius: 0 0 5px 5px;
}

.stab.current span {
    line-height: 18px;
    border-bottom: 2px solid #217346;
}

.add {
    width: 94px;
    height: 18px;
    margin-top: 6px;
    border-left: 1px solid #555;
}

.hscroll {
    margin-left: auto;
    width: 40%;
    height: 30px;
    display: flex;
    align-items: center;
    padding-right: 24px;
}

.hscroll .dots {
    margin-right: 12px;
    width: 8px;
    padding-top: 10px;
}

.htrack {
    flex: 1;
    display: flex;
}

.hthumb {
    width: 76%;
    height: 9px;
    border-radius: 5px;
    background: #9a9a9a;
}

/* Status bar */
.status {
    height: 22px;
    flex: none;
    display: flex;
    align-items: center;
    padding: 0 8px 0 12px;
    font-size: 11px;
    background: #131313;
    border-top: 1px solid #3a3a3a;
}

.access {
    margin-left: 18px;
    gap: 4px;
    font-weight: 600;
}

.views {
    margin-left: auto;
    display: flex;
    align-items: center;
    height: 21px;
}

.view {
    width: 40px;
    height: 21px;
}

.view.on {
    background: #262626;
}

.zoom-btn {
    width: 20px;
    height: 20px;
}

.views input {
    appearance: none;
    width: 100px;
    height: 1px;
    background: #999;
}

.views input::-webkit-slider-thumb {
    appearance: none;
    width: 4px;
    height: 12px;
    background: #aaa;
}

.pct-text {
    width: 34px;
    text-align: right;
}

/* Taskbar */
.taskbar {
    height: 48px;
    flex: none;
    display: grid;
    grid-template-columns: 1fr auto 1fr;
    align-items: center;
    border-top: 1px solid #4a4a4a;
    background: linear-gradient(90deg, #1e2629 0%, #242226 22%, #28222a 30%, #21211f 42%, #202627 58%, #1d2628 80%, #20262a 90%, #211f27 100%);
}

.weather {
    display: flex;
    align-items: center;
    gap: 8px;
    padding-left: 19px;
}

.cloud {
    position: relative;
    display: flex;
    height: 28px;
    align-items: flex-end;
}

.badge {
    position: absolute;
    top: -3px;
    right: -4px;
    width: 16px;
    height: 16px;
    border-radius: 50%;
    background: #ff99a4;
    color: #222;
    font-size: 11px;
    text-align: center;
}

.soft {
    color: #c4c4c4;
}

.apps {
    display: flex;
    align-items: center;
}

.app {
    position: relative;
    width: 44px;
    height: 44px;
}

.win-start {
    width: 48px;
}

.run::after, .active-app::after {
    content: "";
    position: absolute;
    bottom: 2px;
    width: 6px;
    height: 3px;
    border-radius: 2px;
    background: #9a9a9a;
}

.active-app {
    width: 40px;
    margin: 0 2px;
    border: 1px solid #383d3e;
    border-radius: 5px;
    background: #2a2e2f;
}

.active-app::after {
    width: 16px;
    bottom: 1px;
    background: #5fc3f2;
}

.profile {
    position: absolute;
    top: 6px;
    right: 12px;
    font-size: 11px;
}

.task-search {
    width: 220px;
    height: 32px;
    margin-right: 2px;
    display: flex;
    align-items: center;
    gap: 10px;
    padding: 0 6px 0 11px;
    border: 1px solid #535056;
    border-radius: 16px;
    background: #403d43;
}

.task-search input {
    flex: 1;
    min-width: 0;
    font-size: 13px;
}

.task-search input::placeholder {
    color: #d4d4d4;
}

.tray {
    display: flex;
    align-items: center;
    justify-content: flex-end;
    gap: 18px;
    padding-right: 20px;
}

.net {
    display: flex;
    align-items: center;
    gap: 8px;
}

.clock {
    text-align: right;
    white-space: nowrap;
    margin: 0 -10px 0 -3px;
}
```

FILE: script.js
```js
var companies = [
    // name, KERTAS KERJA, PK, PM, BUKPOT, DATA GAJI, SPT LENGKAP, STP, CATATAN, PROGRESS, RK, CATATAN, Cek
    ["CV Duta Jasa Laser", "Feb - Des", "tidak ada", "tidak ada", "tidak ada", "Feb - Des", "Feb - Des", "tidak ada", "SPT PPH 21 LB", "Sudah input accurate jan - nov", "Feb - Des", "lap keu sampai Des", ""],
    ["CV Duta Jaya Plat", "Jan - Nov", "tidak ada", "tidak ada", "tidak ada", "Jan - Nov", "Jan - Nov", "tidak ada", "", "Sudah input accurate jan - nov", "Jan - Des", "lap keu sampai Des", ""],
    ["CV Duta Jaya Plat RO", "Jan - Nov", "tidak ada", "Mar - Nov", "tidak ada", "Feb - Nov", "Feb - Nov", "tidak ada", "", "Sudah input accurate Feb - Nov", "Jan - Des", "lap keu sampai Des", ""],
    ["CV Sukses Abadi Pro", "Jan - Nov", "Mar-Nov", "tidak ada", "Mar-Sept", "Apr - Nov", "Feb - Nov", "tidak ada", "", "Sudah input accurate Feb - Nov", "Feb - Des", "lap keu sampai Des", ""],
    ["CV Sentosa Abadi Advertising", "Feb - DES", "tidak ada", "tidak ada", "tidak ada", "Apr - DES", "Feb - Nov", "tidak ada", "", "Sudah input accurate Feb - Des", "Feb - Des", "lap keu sampai Des", ""],
    ["CV Huled Wijaya Sentosa", "Des", "tidak ada", "tidak ada", "tidak ada", "Tidak ada", "Des", "tidak ada", "", "sudah ada accurate", "Des", "lap keu sampai Des", ""],
    ["CV Sinar Duta Laser RO", "Sept - Nov", "tidak ada", "tidak ada", "tidak ada", "Sept - Nov", "Sept - Nov", "tidak ada", "", "Sudah input accurate sept-Nov", "sept -Des", "", ""],
    ["CV Rajawali Sinar Elektrik", "Sept - Nov", "tidak ada", "tidak ada", "tidak ada", "Sept - Nov", "Sept - Nov", "tidak ada", "", "Sudah input accurate sept-Nov", "sept -Nov", "", ""],
    ["PT BLV Samudera Bersaudara", "Jan - Nov", "tidak ada", "Jan - Nov", "Jan - Nov", "Jan - Nov", "Jan - Nov", "tidak ada", "", "sudah input acurate januari - Nov", "Jan - Nov", "", ""],
    ["PT Star Way", "Jan-Nov", "Jan-Nov", "Jan-Nov", "Feb - Nov", "Jan-Nov", "Januari - Oktober", "tidak ada", "", "sudah input acurate Jan-Nov", "Jan - Nov", "", ""],
    ["CV Bintang Terang Timur", "Jan - Nov", "Jan - Nov", "tidak ada", "tidak ada", "Jan - Nov", "Jan - Nov", "ada", "", "sudah input acurate Jan-Nov", "Jan - Nov", "", ""],
    ["CV Bintang Merah Timur", "Jan - Juni", "tidak ada", "Sept", "Jan - Juni", "Januari - Juni", "Januari - Juni", "tidak ada", "", "sudah input acurate januari - September", "Januari - September", "NE", ""],
    ["CV Ridho Utama Sejati", "Jan - Okt", "tidak ada", "tidak ada", "tidak ada", "Jan - Okt", "Jan - Okt", "tidak ada", "", "sudah input acurate Jan - Okt", "Jan - Okt", "", ""],
    ["CV Langit Jaya Abadi", "Mei - Okt", "tidak ada", "tidak ada", "tidak ada", "Juli-Okt", "Juli-Okt", "tidak ada", "", "sudah input acurate Mei - Okt", "Mei - Okt", "", ""],
    ["PT Berdaya Energy Engineering", "Jan - Okt", "Jan - Okt", "Ags-sept", "Jan - Okt", "Oktober", "Jan - Okt", "tidak ada", "tidak ada data hanya lap", "sudah input acurate Jan - Okt", "Jan - Okt", "", ""],
    ["CV Rekayasa Power System", "Januari - Oktober", "tidak ada", "tidak ada", "tidak ada", "tidak ada", "Januari - Oktober", "ada", "", "Tidak ada data (CV PASIF)", "tidak ada", "Cv Pasif", ""],
    ["Johnny Kalwani", "Januari - Oktober", "tidak ada", "tidak ada", "tidak ada", "tidak ada", "Januari - Okt", "tidak ada", "", "", "", "", ""],
    ["Kalwani Stockindo Utama Kemayoran", "Jan - Okt", "tidak ada", "Jan - Okt", "Sept-Okt", "Jan - Okt", "Jan - Okt", "tidak ada", "", "sudah input acurate januari - Oktober", "Januari - Oktober", "", ""],
    ["CV Masaba Fashion Kreasi", "Jan - Okt", "tidak ada", "tidak ada", "tidak ada", "tidak ada", "tidak ada", "tidak ada", "", "sudah input acurate januari - Oktober", "Januari - Oktober", "", ""],
    ["PT Sahara Wellness Abadi", "", "", "", "", "", "", "", "", "", "", "", ""],
    ["PT Jay Kay Kasindo", "", "", "", "", "", "", "", "", "", "", "", ""],
    ["PT Jejak Karya Bumi", "", "", "", "", "", "", "", "", "", "", "", ""],
    ["PT Kanawa Abadi Nusantara", "Jan - Des", "Jan - Des", "Jan - Des", "Jan - Nov", "Jan - Nov", "Jan - Nov", "tidak ada", "", "Sudah Input Accurate Jan - Nov", "januari - Nov", "", "19/01/2026"],
    ["CV Pergota Karya Mandiri", "Jan - Des", "tidak ada", "tidak ada", "tidak ada", "tidak ada", "Jan - Nov", "tidak ada", "", "Excel Jan - Des", "Jan - Des", "lap keu sampai Des", "21/01/2026"],
    ["CV Malik Mitra Persada", "Jan - Des", "tidak ada", "tidak ada", "tidak ada", "tidak ada", "Jan - Nov", "tidak ada", "", "Excel Jan - Des", "Jan - Des", "lap keu sampai Des", "21/01/2026"],
    ["CV Kencana Berkah Kontruksi/PT. Berjaya Berkah", "Jan - Des", "tidak ada", "tidak ada", "tidak ada", "tidak ada", "Jan - Nov", "tidak ada", "", "Accurate Jan - Des", "Jan - Des", "lap keu sampai Des", ""],
    ["CV Mahri Sejahtera Bersama", "Jan - Des", "tidak ada", "tidak ada", "tidak ada", "tidak ada", "Jan - Nov", "tidak ada", "", "Excel Jan - Des", "Jan - Des", "lap keu sampai Des", "21/01/2026"],
    ["CV Kencana Malik", "Jan - Des", "tidak ada", "tidak ada", "tidak ada", "tidak ada", "Jan - Okt", "tidak ada", "", "Excel Jan - Des", "Jan - Des", "lap keu sampai Des", "21/01/2026"],
    ["CV Nusantara Persada Berkah", "", "", "", "", "", "", "", "blm ada data", "", "", "blm ada transaksi", ""]
];

var SELECTED_ROW = 18;
var LAST_ROW = 37;

function head(row) {
    return '<th class="rh' + (row === SELECTED_ROW ? ' sel' : '') + '">' + row + '</th>';
}

function emptyCells(count) {
    return '<td></td>'.repeat(count);
}

function companyRow(c, i) {
    var row = i + 4;
    var done = (row >= 4 && row <= 9) || (row >= 26 && row <= 31);
    var html = '<tr class="line' + (done ? ' done' : '') + '">' + head(row);
    html += '<td class="dark num">' + (i + 1) + '</td><td class="dark">' + c[0] + '</td>';
    for (var k = 1; k < 12; k++) {
        var cls = 'fill' + (row === SELECTED_ROW && k === 11 ? ' cursor' : '');
        html += '<td class="' + cls + '">' + c[k] + '</td>';
    }
    return html + '<td class="num">' + c[12] + '</td></tr>';
}

var html = '<tr class="under">' + head(1) + '<td></td><td>REKAP DATA 2025</td>' + emptyCells(12) + '</tr>';

html += '<tr class="line">' + head(2) +
    '<td class="blue" rowspan="2">No</td><td class="blue" rowspan="2">Nama Perusahaan</td>' +
    '<td class="merged" colspan="8">PAJAK</td><td class="merged" colspan="3">PEMBUKUAN</td>' +
    '<td class="blue cek" rowspan="2">Cek Mas Aldi/Mas Dedi/</td></tr>';

html += '<tr class="line">' + head(3);
["KERTAS KERJA", "PK", "PM", "BUKPOT", "DATA GAJI", "SPT LENGKAP", "STP", "CATATAN", "PROGRESS", "RK", "CATATAN"].forEach(function(t) {
    html += '<td>' + t + '</td>';
});
html += '</tr>' + companies.map(companyRow).join('');

for (var r = companies.length + 4; r <= LAST_ROW; r++) {
    html += '<tr>' + head(r);
    html += r === 35 ? emptyCells(3) + '<td class="num">18%</td>' + emptyCells(10) : emptyCells(14);
    html += '</tr>';
}

document.getElementById('rows').innerHTML = html;
```
